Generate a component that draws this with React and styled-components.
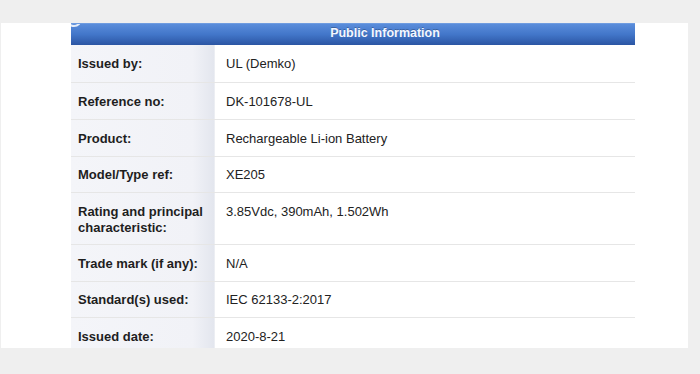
import React from "react";
import styled, { createGlobalStyle } from "styled-components";

const GlobalStyle = createGlobalStyle`
  html, body {
    margin: 0;
    padding: 0;
    background: #efefef;
    font-family: "Liberation Sans", Arial, sans-serif;
  }
`;

const Page = styled.div`
  width: 700px;
  height: 374px;
  padding-top: 23px;
  padding-left: 1px;
  box-sizing: border-box;
`;

const Card = styled.div`
  width: 687px;
  height: 325px;
  background: #ffffff;
  overflow: hidden;
  padding-left: 70px;
  box-sizing: border-box;
`;

const Table = styled.div`
  width: 564px;
`;

const Header = styled.div`
  position: relative;
  overflow: hidden;
  height: 22px;
  display: flex;
  align-items: flex-start;
  justify-content: center;
  padding: 2px 0 0 64px;
  background: linear-gradient(to bottom, #5a8ddb 0%, #4276c9 50%, #2b55a3 100%);
  border-top: 1px solid #6f9ce0;
  box-sizing: border-box;
  color: #f4f7ff;
  font-weight: bold;
  font-size: 12.5px;
  line-height: 15px;
  text-shadow: 0 -1px 0 rgba(0, 0, 0, 0.25);
`;

const Corner = styled.div`
  position: absolute;
  left: -5px;
  top: -13px;
  width: 16px;
  height: 16px;
  border-radius: 50%;
  border: 2px solid rgba(255, 255, 255, 0.85);
  box-sizing: border-box;
`;

const Row = styled.div`
  display: grid;
  grid-template-columns: 144px 1fr;
  height: ${({ h }) => h}px;
  border-bottom: 1px solid #e6e6e6;
  box-sizing: border-box;
`;

const Label = styled.div`
  display: flex;
  align-items: ${({ top }) => (top ? "flex-start" : "center")};
  padding: ${({ top }) => (top ? "11px 0 0 7px" : "1px 0 0 7px")};
  background: linear-gradient(to right, #f4f5f9 0%, #f1f2f7 85%, #e3e6ee 100%);
  border-right: 1px solid #eceef3;
  color: #1e1e1e;
  font-weight: bold;
  font-size: 13px;
  line-height: 16px;
`;

const Value = styled.div`
  display: flex;
  align-items: ${({ top }) => (top ? "flex-start" : "center")};
  padding: ${({ top }) => (top ? "11px 0 0 11px" : "1px 0 0 11px")};
  color: #222222;
  font-size: 13px;
  line-height: 16px;
`;

const rows = [
  { label: "Issued by:", value: "UL (Demko)", h: 38 },
  { label: "Reference no:", value: "DK-101678-UL", h: 37 },
  { label: "Product:", value: "Rechargeable Li-ion Battery", h: 37 },
  { label: "Model/Type ref:", value: "XE205", h: 36 },
  {
    label: (
      <>
        Rating and principal
        <br />
        characteristic:
      </>
    ),
    value: "3.85Vdc, 390mAh, 1.502Wh",
    h: 52,
    top: true,
  },
  { label: "Trade mark (if any):", value: "N/A", h: 37 },
  { label: "Standard(s) used:", value: "IEC 62133-2:2017", h: 36 },
  { label: "Issued date:", value: "2020-8-21", h: 37 },
];

const App = () => {
  return (
    <>
      <GlobalStyle />
      <Page>
        <Card>
          <Table>
            <Header>
              <Corner />
              Public Information
            </Header>
            {rows.map((r, i) => (
              <Row key={i} h={r.h}>
                <Label top={r.top}>{r.label}</Label>
                <Value top={r.top}>{r.value}</Value>
              </Row>
            ))}
          </Table>
        </Card>
      </Page>
    </>
  );
};

export default App;
